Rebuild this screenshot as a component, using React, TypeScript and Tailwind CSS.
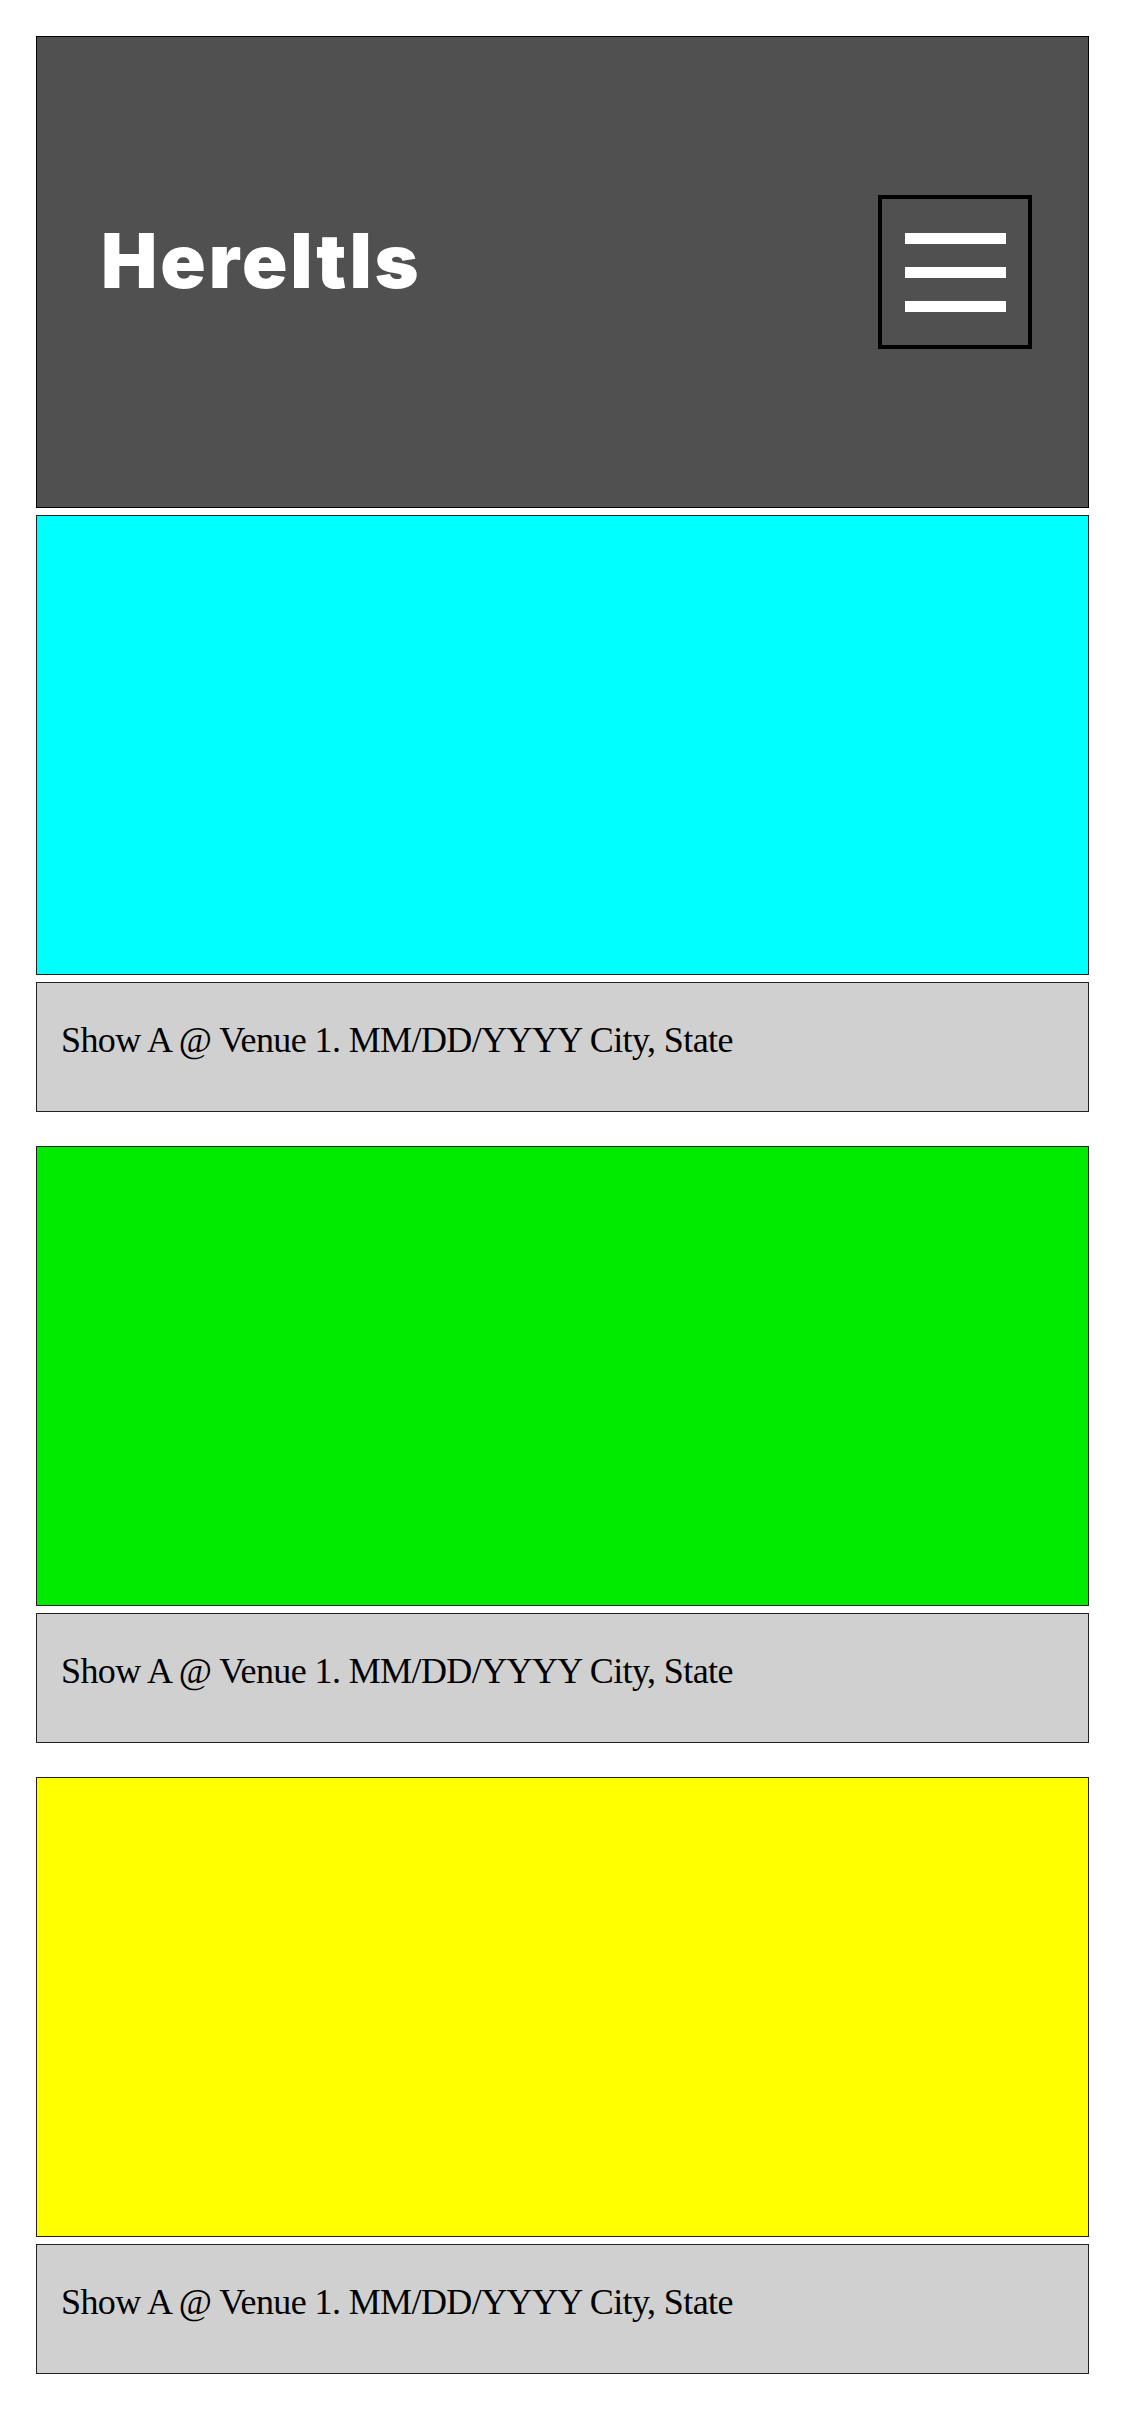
const shows = [
  { color: "bg-[#00ffff]", text: "Show A @ Venue 1. MM/DD/YYYY City, State" },
  { color: "bg-[#00eb00]", text: "Show A @ Venue 1. MM/DD/YYYY City, State" },
  { color: "bg-[#ffff00]", text: "Show A @ Venue 1. MM/DD/YYYY City, State" },
];

function Header() {
  return (
    <div className="flex h-[472px] items-center justify-between border border-black bg-[#505050] pl-[64px] pr-[56px]">
      <h1 className="pb-[24px] font-['Inter',sans-serif] text-[75px] font-black leading-none tracking-[3px] text-white">
        HereItIs
      </h1>
      <button className="flex h-[154px] w-[154px] flex-col items-center justify-center gap-[23px] border-[4px] border-black">
        <span className="block h-[11px] w-[101px] bg-white" />
        <span className="block h-[11px] w-[101px] bg-white" />
        <span className="block h-[11px] w-[101px] bg-white" />
      </button>
    </div>
  );
}

function ShowCard({ color, text }: { color: string; text: string }) {
  return (
    <div className="flex flex-col gap-[7px]">
      <div className={`h-[460px] border border-[#222] ${color}`} />
      <div className="h-[130px] border border-[#222] bg-[#d0d0d0] pl-[24px] pt-[39px]">
        <p className="font-['Liberation_Serif',serif] text-[36px] leading-[36px] tracking-[-0.6px] text-black">{text}</p>
      </div>
    </div>
  );
}

export default function App() {
  return (
    <div className="min-h-[2436px] bg-white px-[36px] pt-[36px]">
      <Header />
      <div className="mt-[7px] flex flex-col gap-[34px]">
        {shows.map((s, i) => (
          <ShowCard key={i} color={s.color} text={s.text} />
        ))}
      </div>
    </div>
  );
}
